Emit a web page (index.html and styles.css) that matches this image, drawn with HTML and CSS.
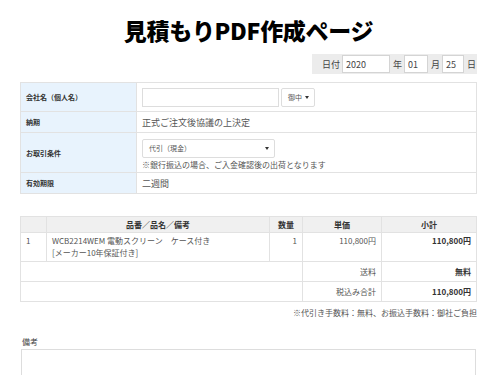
FILE: index.html
```html
<!DOCTYPE html>
<html lang="ja">
<head>
    <meta charset="UTF-8">
    <title>見積もりPDF作成ページ</title>
    <link rel="stylesheet" href="styles.css">
</head>
<body>
    <div class="page">
        <h1 class="title">見積もりPDF作成ページ</h1>

        <div class="date-row">
            <div class="date-bar">
                <span>日付</span><input type="text" class="d-year" value="2020"><span>年</span><input type="text" class="d-month" value="01"><span>月</span><input type="text" class="d-day" value="25"><span>日</span>
            </div>
        </div>

        <table class="info">
            <tr class="r-company">
                <th>会社名（個人名）</th>
                <td>
                    <input type="text" class="company">
                    <span class="sel sel-honor">御中<i class="arrow"></i></span>
                </td>
            </tr>
            <tr class="r-short">
                <th>納期</th>
                <td>正式ご注文後協議の上決定</td>
            </tr>
            <tr class="r-pay">
                <th>お取引条件</th>
                <td>
                    <span class="sel sel-pay">代引（現金）<i class="arrow"></i></span>
                    <div class="note">※銀行振込の場合、ご入金確認後の出荷となります</div>
                </td>
            </tr>
            <tr class="r-short">
                <th>有効期限</th>
                <td>二週間</td>
            </tr>
        </table>

        <table class="items">
            <tr class="head">
                <th class="c-no"></th>
                <th class="c-name">品番／品名／備考</th>
                <th class="c-qty">数量</th>
                <th class="c-price">単価</th>
                <th class="c-sub">小計</th>
            </tr>
            <tr class="item">
                <td class="c-no">1</td>
                <td class="c-name">WCB2214WEM 電動スクリーン　ケース付き<br>[メーカー10年保証付き]</td>
                <td class="c-qty num">1</td>
                <td class="c-price num">110,800円</td>
                <td class="c-sub num bold">110,800円</td>
            </tr>
            <tr class="sum">
                <td colspan="3"></td>
                <td class="num">送料</td>
                <td class="num bold">無料</td>
            </tr>
            <tr class="sum">
                <td colspan="3"></td>
                <td class="num">税込み合計</td>
                <td class="num bold">110,800円</td>
            </tr>
        </table>

        <p class="fee">※代引き手数料：無料、お振込手数料：御社ご負担</p>

        <div class="remarks">
            <div class="remarks-label">備考</div>
            <textarea class="remarks-box"></textarea>
        </div>
    </div>
</body>
</html>
```

FILE: styles.css
```css
body {
    margin: 0;
    font-family: "Noto Sans CJK JP", "Noto Sans", sans-serif;
    color: #555;
    background: #fff;
}
.page {
    width: 457px;
    margin-left: 20px;
}
.title {
    margin: 0;
    padding-top: 13px;
    height: 39px;
    font-size: 23px;
    line-height: 34px;
    font-weight: 900;
    color: #000;
    text-align: center;
    letter-spacing: -0.3px;
}
.date-row {
    display: flex;
    justify-content: flex-end;
    margin-top: 2px;
}
.date-bar {
    display: flex;
    align-items: center;
    justify-content: flex-end;
    width: 165px;
    height: 20px;
    box-sizing: border-box;
    padding-right: 1px;
    background: #ececec;
    font-size: 9px;
    color: #444;
    white-space: nowrap;
}
.date-bar input {
    height: 18px;
    box-sizing: border-box;
    border: 1px solid #d4d4d4;
    padding: 0 3px;
    font-family: inherit;
    font-size: 9px;
    color: #444;
    margin: 0 3px 0 2px;
}
.d-year {
    width: 48px;
}
.d-month {
    width: 24px;
}
.d-day {
    width: 22px;
}
table {
    border-collapse: collapse;
    width: 457px;
    font-size: 8px;
}
th, td {
    border: 1px solid #e2e2e2;
    padding: 0 5px;
}
.info {
    margin-top: 8px;
}
.info th {
    width: 105px;
    background: #e8f3fd;
    color: #333;
    text-align: left;
    font-size: 7px;
    font-weight: bold;
}
.info td {
    font-size: 9px;
}
.r-company {
    height: 29px;
}
.r-short {
    height: 21px;
}
.r-pay {
    height: 40px;
}
.company {
    width: 137px;
    height: 19px;
    box-sizing: border-box;
    border: 1px solid #ddd;
    margin: 0;
    vertical-align: middle;
}
.sel {
    display: inline-block;
    position: relative;
    height: 19px;
    box-sizing: border-box;
    border: 1px solid #ddd;
    border-radius: 2px;
    padding-left: 6px;
    font-size: 7px;
    line-height: 17px;
    color: #555;
    vertical-align: middle;
}
.sel-honor {
    width: 34px;
    margin-left: 0;
}
.sel-pay {
    width: 133px;
    margin-top: 3px;
}
.arrow {
    position: absolute;
    right: 5px;
    top: 7px;
    border-left: 2px solid transparent;
    border-right: 2px solid transparent;
    border-top: 3px solid #333;
}
.note {
    font-size: 8px;
    line-height: 11px;
    margin-top: 1px;
}
.items {
    margin-top: 22px;
}
.items th {
    height: 15px;
    background: #f0f0f0;
    color: #333;
    font-size: 8px;
    font-weight: bold;
}
.c-no {
    width: 15px;
}
.c-qty {
    width: 22px;
}
.c-price {
    width: 68px;
}
.c-sub {
    width: 84px;
}
.item {
    height: 29px;
}
.item td {
    vertical-align: top;
    padding-top: 2px;
    line-height: 12px;
}
.sum {
    height: 20px;
}
.num {
    text-align: right;
}
.bold {
    font-weight: bold;
    color: #333;
}
.fee {
    margin: 5px 0 0;
    font-size: 8px;
    line-height: 12px;
    text-align: right;
}
.remarks {
    margin-top: 17px;
}
.remarks-label {
    font-size: 8px;
    line-height: 12px;
    padding-left: 2px;
    color: #444;
}
.remarks-box {
    display: block;
    width: 455px;
    height: 60px;
    box-sizing: border-box;
    border: 1px solid #ddd;
    margin: 1px 0 0 1px;
    resize: none;
}
```
